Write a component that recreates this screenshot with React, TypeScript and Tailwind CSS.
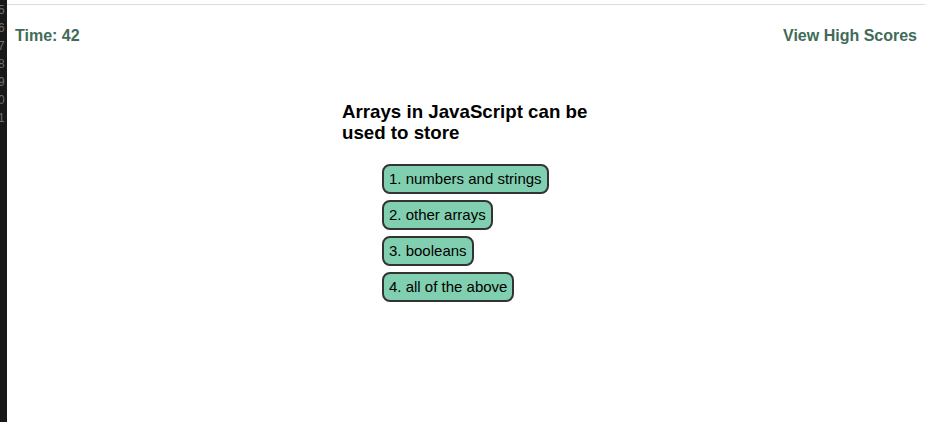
import { useState } from 'react';

const choices = ['1. numbers and strings', '2. other arrays', '3. booleans', '4. all of the above'];
const gutter = ['5', '6', '7', '8', '9', '0', '1'];

export default function App() {
  const [time] = useState(42);

  return (
    <div className="flex h-[422px] w-[925px] overflow-hidden bg-white font-['Liberation_Sans',Arial,sans-serif]">
      {/* editor gutter peeking in at the left */}
      <div className="w-[7px] shrink-0 overflow-hidden bg-[#181818] pt-[1px]">
        {gutter.map((n, i) => (
          <div key={i} className="-ml-[2px] h-[18px] text-[12px] leading-[18px] text-[#6e6e6e]">
            {n}
          </div>
        ))}
      </div>

      <div className="flex-1 pt-[4px]">
        <div className="border-t border-[#dcdcdc]">
          <header className="flex items-center justify-between px-[8px] pt-[19px] text-[16px] font-bold text-[#416b58]">
            <span>Time: {time}</span>
            <a className="cursor-pointer">View High Scores</a>
          </header>

          <main className="ml-[335px] mt-[53px] w-[260px]">
            <h2 className="text-[18.72px] font-bold leading-[21px] text-black">
              Arrays in JavaScript can be used to store
            </h2>
            <ul className="mt-[21px] flex flex-col items-start gap-[6px] pl-[40px]">
              {choices.map((c) => (
                <li key={c}>
                  <button className="rounded-[8px] border-2 border-[#333] bg-[#80cfb0] px-[5px] py-[4px] text-[15px] leading-[18px] text-black whitespace-nowrap">
                    {c}
                  </button>
                </li>
              ))}
            </ul>
          </main>
        </div>
      </div>
    </div>
  );
}
